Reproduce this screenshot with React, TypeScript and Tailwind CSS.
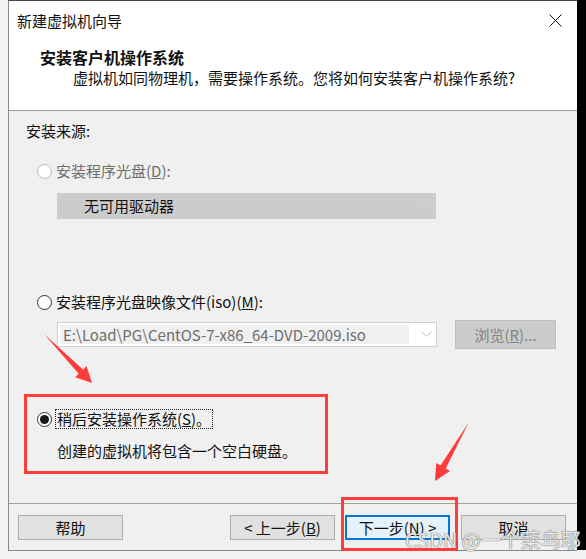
import React from "react";

const FONT = { fontFamily: '"Segoe UI", "Noto Sans CJK SC", "Noto Sans", sans-serif' };

function Radio({ state }: { state: "disabled" | "off" | "on" }) {
  const border = state === "disabled" ? "border-[#bcbcbc]" : "border-[#333333]";
  return (
    <div className={`w-[15px] h-[15px] rounded-full border ${border} bg-white flex items-center justify-center shrink-0`}>
      {state === "on" && <div className="w-[9px] h-[9px] rounded-full bg-[#1a1a1a]" />}
    </div>
  );
}

function Chevron({ color }: { color: string }) {
  return (
    <svg width="11" height="7" viewBox="0 0 11 7" className="shrink-0">
      <polyline points="0.5,0.5 5.5,5.5 10.5,0.5" fill="none" stroke={color} strokeWidth="1" />
    </svg>
  );
}

export default function App() {
  return (
    <div className="relative w-[586px] h-[559px] bg-[#f4f4f4] overflow-hidden text-[15px] text-[#111]" style={FONT}>
      <div className="flex h-[551px]">
        <div className="w-[8px] shrink-0" />
        <div className="w-[569px] h-[551px] border-l border-b border-t border-l-[#8a8a8a] border-b-[#8a8a8a] border-t-[#444] bg-[#f0f0f0] flex flex-col">
          {/* title bar */}
          <div className="h-[39px] bg-white flex items-center pl-[8px] pr-[15px] justify-between">
            <span className="leading-[20px]">新建虚拟机向导</span>
            <svg width="13" height="13" viewBox="0 0 13 13">
              <path d="M0.5 0.5 L12.5 12.5 M12.5 0.5 L0.5 12.5" stroke="#111" strokeWidth="1" />
            </svg>
          </div>
          {/* header */}
          <div className="h-[71px] bg-white border-b border-[#a0a0a0] pt-[7px]">
            <div className="pl-[31px] leading-[20px] font-bold text-[16px]">安装客户机操作系统</div>
            <div className="pl-[64px] leading-[20px] mt-[1px]">虚拟机如同物理机，需要操作系统。您将如何安装客户机操作系统?</div>
          </div>
          {/* content */}
          <div className="flex-1 flex flex-col pl-[17px]">
            <div className="mt-[10px] leading-[20px]">安装来源:</div>
            <div className="mt-[20px] h-[20px] flex items-center ml-[11px] gap-[4px] text-[#6d6d6d]">
              <Radio state="disabled" />
              <span className="leading-[20px]">
                安装程序光盘(<span className="underline">D</span>):
              </span>
            </div>
            <div className="mt-[12px] ml-[31px] w-[379px] h-[26px] bg-[#cccccc] border border-[#cccccc] flex items-center justify-between pl-[26px] pr-[5px]">
              <span className="leading-[20px]">无可用驱动器</span>
              <Chevron color="#d8d8d8" />
            </div>
            <div className="mt-[73px] h-[20px] flex items-center ml-[11px] gap-[4px]">
              <Radio state="off" />
              <span className="leading-[20px]">
                安装程序光盘映像文件(iso)(<span className="underline">M</span>):
              </span>
            </div>
            <div className="mt-[8px] h-[29px] flex items-start ml-[31px]">
              <div className="mt-[2px] w-[380px] h-[25px] bg-white border border-[#cfcfcf] flex items-center pr-[4px]">
                <div className="ml-[2px] h-[19px] w-[349px] bg-[#f0f0f0] flex items-center pl-[3px] text-[#6d6d6d] leading-[19px] whitespace-nowrap">
                  E:\Load\PG\CentOS-7-x86_64-DVD-2009.iso
                </div>
                <div className="flex-1" />
                <Chevron color="#c0c0c0" />
              </div>
              <div className="ml-[18px] w-[101px] h-[29px] bg-[#cccccc] border border-[#bfbfbf] flex items-center justify-center text-[#838383]">
                <span className="leading-[20px]">
                  浏览(<span className="underline">R</span>)...
                </span>
              </div>
            </div>
            <div className="mt-[60px] h-[20px] flex items-center ml-[11px] gap-[4px]">
              <Radio state="on" />
              <span className="leading-[18px] border border-dotted border-[#222] px-[1px] -ml-[1px]">
                稍后安装操作系统(<span className="underline">S</span>)。
              </span>
            </div>
            <div className="mt-[12px] ml-[31px] leading-[20px]">创建的虚拟机将包含一个空白硬盘。</div>
          </div>
          {/* footer */}
          <div className="h-[47px] border-t border-[#a0a0a0] pt-[11px] flex items-start pr-[11px]">
            <div className="ml-[9px] w-[105px] h-[25px] bg-[#e1e1e1] border border-[#adadad] flex items-center justify-center leading-[20px]">
              帮助
            </div>
            <div className="flex-1" />
            <div className="w-[105px] h-[25px] bg-[#e1e1e1] border border-[#adadad] flex items-center justify-center leading-[20px]">
              &lt; 上一步(<span className="underline">B</span>)
            </div>
            <div className="ml-[10px] w-[105px] h-[25px] bg-[#e5f1fb] border-2 border-[#0078d7] flex items-center justify-center leading-[20px]">
              下一步(<span className="underline">N</span>) &gt;
            </div>
            <div className="ml-[11px] w-[105px] h-[25px] bg-[#e1e1e1] border border-[#adadad] flex items-center justify-center leading-[20px]">
              取消
            </div>
          </div>
        </div>
        <div className="flex-1 bg-black h-[550px]" />
      </div>

      {/* annotations overlay */}
      <div className="absolute left-[24px] top-[394px] w-[304px] h-[80px] border-[3px] border-[#ff3b3b] pointer-events-none" />
      <div className="absolute left-[341px] top-[497px] w-[117px] h-[54px] border-[3px] border-[#ff3b3b] pointer-events-none" />
      <svg className="absolute left-0 top-0 pointer-events-none" width="586" height="559" viewBox="0 0 586 559">
        <polygon
          points="44,334 78.7,373.7 75.1,377.2 92,383 86.5,366 83,369.5"
          fill="#ff3b3b"
        />
        <polygon
          points="469,422 440.5,465.5 436.2,463 435,481 450,471 445.7,468.5"
          fill="#ff3b3b"
        />
      </svg>
      <div
        className="absolute left-[405px] top-[527px] text-[20px] leading-[26px] text-[#e8e8e8] whitespace-nowrap pointer-events-none [text-shadow:0_0_1px_#666,0_0_1px_#666]"
        style={{ fontFamily: '"Noto Sans CJK SC", "Noto Sans", sans-serif' }}
      >
        CSDN @一个菜鸟耶
      </div>
    </div>
  );
}
